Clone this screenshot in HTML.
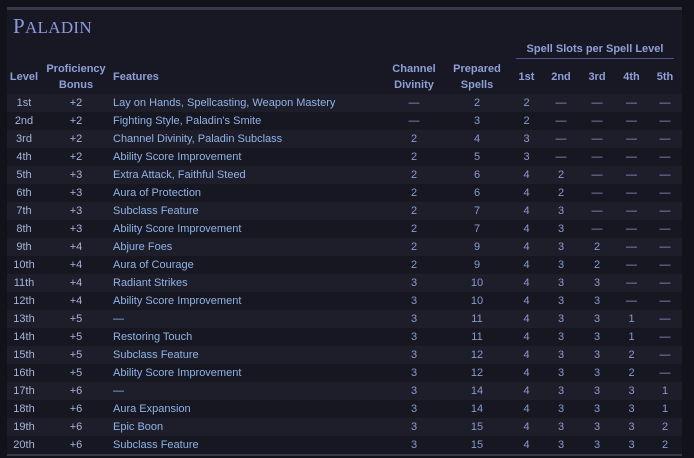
<!DOCTYPE html>
<html><head><meta charset="utf-8"><style>
html,body{margin:0;padding:0;background:#12131a;width:694px;height:458px;overflow:hidden;font-family:"Liberation Sans",sans-serif;}
.panel{position:absolute;left:7px;top:7px;width:675px;height:449px;background:#181824;border-top:3px solid #3a3848;border-bottom:3px solid #3a3848;box-sizing:border-box;}
.title{position:absolute;left:6px;top:4px;font-family:"Liberation Serif",serif;color:#8d9ae0;font-size:21px;letter-spacing:0.3px;}
.title small{font-size:17px;}
.ss{position:absolute;left:509px;top:33px;width:158px;text-align:center;font-weight:bold;font-size:11px;color:#8f9fd8;border-bottom:1px solid #4a5590;padding-bottom:3px;}
table{position:absolute;left:0;top:49px;border-collapse:collapse;table-layout:fixed;width:675px;font-size:11px;}
th{color:#8f9fd8;font-weight:bold;line-height:16px;height:35px;padding:0;text-align:center;vertical-align:middle;}
th.f{text-align:left;padding-left:2px;}
td{height:18px;padding:0;text-align:center;color:#8a9ad0;line-height:18px;white-space:nowrap;}
td.l{color:#a6b3d9;}
td.p{color:#a6b3d9;}
td.f{text-align:left;padding-left:2px;color:#8fb3e6;}
tbody tr:nth-child(odd){background:#1e1e2b;}
tbody tr:nth-child(even){background:#171722;}
</style></head><body>
<div class="panel">
<div class="title">P<small>ALADIN</small></div>
<div class="ss">Spell Slots per Spell Level</div>
<table>
<colgroup><col style="width:34px"><col style="width:70px"><col style="width:273px"><col style="width:60px"><col style="width:66px"><col style="width:33px"><col style="width:36px"><col style="width:36px"><col style="width:33px"><col style="width:34px"></colgroup>
<thead><tr><th>Level</th><th>Proficiency<br>Bonus</th><th class="f">Features</th><th>Channel<br>Divinity</th><th>Prepared<br>Spells</th><th>1st</th><th>2nd</th><th>3rd</th><th>4th</th><th>5th</th></tr></thead>
<tbody>
<tr><td class="l">1st</td><td class="p">+2</td><td class="f">Lay on Hands, Spellcasting, Weapon Mastery</td><td>—</td><td>2</td><td>2</td><td>—</td><td>—</td><td>—</td><td>—</td></tr>
<tr><td class="l">2nd</td><td class="p">+2</td><td class="f">Fighting Style, Paladin's Smite</td><td>—</td><td>3</td><td>2</td><td>—</td><td>—</td><td>—</td><td>—</td></tr>
<tr><td class="l">3rd</td><td class="p">+2</td><td class="f">Channel Divinity, Paladin Subclass</td><td>2</td><td>4</td><td>3</td><td>—</td><td>—</td><td>—</td><td>—</td></tr>
<tr><td class="l">4th</td><td class="p">+2</td><td class="f">Ability Score Improvement</td><td>2</td><td>5</td><td>3</td><td>—</td><td>—</td><td>—</td><td>—</td></tr>
<tr><td class="l">5th</td><td class="p">+3</td><td class="f">Extra Attack, Faithful Steed</td><td>2</td><td>6</td><td>4</td><td>2</td><td>—</td><td>—</td><td>—</td></tr>
<tr><td class="l">6th</td><td class="p">+3</td><td class="f">Aura of Protection</td><td>2</td><td>6</td><td>4</td><td>2</td><td>—</td><td>—</td><td>—</td></tr>
<tr><td class="l">7th</td><td class="p">+3</td><td class="f">Subclass Feature</td><td>2</td><td>7</td><td>4</td><td>3</td><td>—</td><td>—</td><td>—</td></tr>
<tr><td class="l">8th</td><td class="p">+3</td><td class="f">Ability Score Improvement</td><td>2</td><td>7</td><td>4</td><td>3</td><td>—</td><td>—</td><td>—</td></tr>
<tr><td class="l">9th</td><td class="p">+4</td><td class="f">Abjure Foes</td><td>2</td><td>9</td><td>4</td><td>3</td><td>2</td><td>—</td><td>—</td></tr>
<tr><td class="l">10th</td><td class="p">+4</td><td class="f">Aura of Courage</td><td>2</td><td>9</td><td>4</td><td>3</td><td>2</td><td>—</td><td>—</td></tr>
<tr><td class="l">11th</td><td class="p">+4</td><td class="f">Radiant Strikes</td><td>3</td><td>10</td><td>4</td><td>3</td><td>3</td><td>—</td><td>—</td></tr>
<tr><td class="l">12th</td><td class="p">+4</td><td class="f">Ability Score Improvement</td><td>3</td><td>10</td><td>4</td><td>3</td><td>3</td><td>—</td><td>—</td></tr>
<tr><td class="l">13th</td><td class="p">+5</td><td class="f">—</td><td>3</td><td>11</td><td>4</td><td>3</td><td>3</td><td>1</td><td>—</td></tr>
<tr><td class="l">14th</td><td class="p">+5</td><td class="f">Restoring Touch</td><td>3</td><td>11</td><td>4</td><td>3</td><td>3</td><td>1</td><td>—</td></tr>
<tr><td class="l">15th</td><td class="p">+5</td><td class="f">Subclass Feature</td><td>3</td><td>12</td><td>4</td><td>3</td><td>3</td><td>2</td><td>—</td></tr>
<tr><td class="l">16th</td><td class="p">+5</td><td class="f">Ability Score Improvement</td><td>3</td><td>12</td><td>4</td><td>3</td><td>3</td><td>2</td><td>—</td></tr>
<tr><td class="l">17th</td><td class="p">+6</td><td class="f">—</td><td>3</td><td>14</td><td>4</td><td>3</td><td>3</td><td>3</td><td>1</td></tr>
<tr><td class="l">18th</td><td class="p">+6</td><td class="f">Aura Expansion</td><td>3</td><td>14</td><td>4</td><td>3</td><td>3</td><td>3</td><td>1</td></tr>
<tr><td class="l">19th</td><td class="p">+6</td><td class="f">Epic Boon</td><td>3</td><td>15</td><td>4</td><td>3</td><td>3</td><td>3</td><td>2</td></tr>
<tr><td class="l">20th</td><td class="p">+6</td><td class="f">Subclass Feature</td><td>3</td><td>15</td><td>4</td><td>3</td><td>3</td><td>3</td><td>2</td></tr>
</tbody></table>
</div>
</body></html>
